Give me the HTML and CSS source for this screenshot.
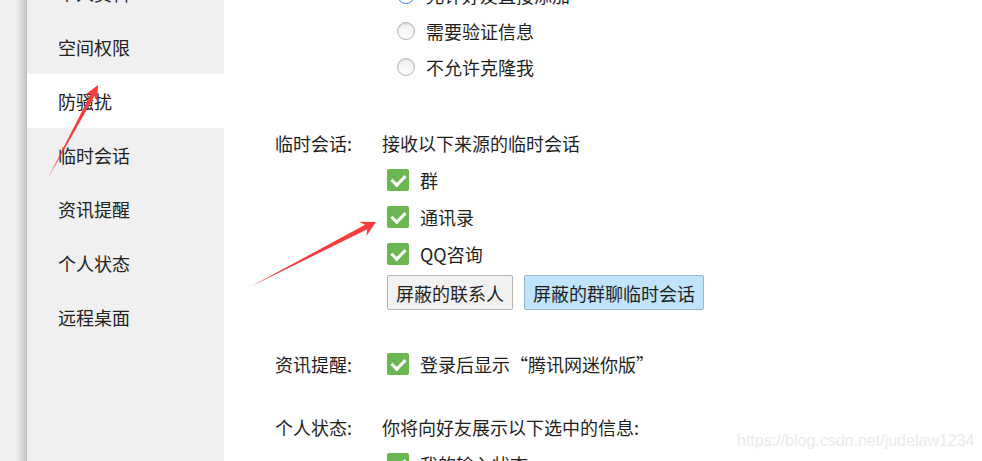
FILE: index.html
```html
<!DOCTYPE html>
<html lang="zh-CN">
<head>
  <meta charset="UTF-8">
  <title>权限设置</title>
  <link rel="stylesheet" href="styles.css">
</head>
<body>

<div class="page">

  <div class="edge"></div>

  <ul class="sidebar">
    <li>个人资料</li>
    <li>空间权限</li>
    <li class="active">防骚扰</li>
    <li>临时会话</li>
    <li>资讯提醒</li>
    <li>个人状态</li>
    <li>远程桌面</li>
  </ul>

  <div class="main">

    <div class="section radios">
      <div class="radio-row"><span class="radio checked"></span>允许好友直接添加</div>
      <div class="radio-row"><span class="radio"></span>需要验证信息</div>
      <div class="radio-row"><span class="radio"></span>不允许克隆我</div>
    </div>

    <div class="section temp">
      <div class="row">
        <span class="label">临时会话:</span>
        <span>接收以下来源的临时会话</span>
      </div>
      <div class="check-row"><span class="check"></span>群</div>
      <div class="check-row"><span class="check"></span>通讯录</div>
      <div class="check-row"><span class="check"></span>QQ咨询</div>
      <div class="buttons">
        <button class="btn">屏蔽的联系人</button>
        <button class="btn btn-hover">屏蔽的群聊临时会话</button>
      </div>
    </div>

    <div class="section news">
      <div class="row">
        <span class="label">资讯提醒:</span>
        <span class="inline-check"><span class="check"></span>登录后显示“腾讯网迷你版”</span>
      </div>
    </div>

    <div class="section status">
      <div class="row">
        <span class="label">个人状态:</span>
        <span>你将向好友展示以下选中的信息:</span>
      </div>
      <div class="check-row"><span class="check"></span>我的输入状态</div>
    </div>

  </div>

  <!-- annotation arrows drawn over the screenshot -->
  <svg class="arrows" width="982" height="461" viewBox="0 0 982 461">
    <polygon points="48,178 90.9,93.7 84.7,94.9 98,85 97.1,101.5 94.7,95.7" fill="#f63c3c"/>
    <polygon points="250,287 365.1,224.8 359,221.8 376,222 366.4,236 367.3,229.2" fill="#f63c3c"/>
  </svg>

  <div class="watermark">https://blog.csdn.net/judelaw1234</div>

</div>

</body>
</html>
```

FILE: styles.css
```css
body {
  margin: 0;
  font-family: "Noto Sans CJK SC", "Liberation Sans", sans-serif;
  font-size: 18px;
  color: #1f1f1f;
  background: #fff;
}

.page {
  position: relative;
  display: flex;
  width: 982px;
  height: 461px;
  overflow: hidden;
}

.edge {
  width: 27px;
  flex: none;
  background: linear-gradient(to right, #f0f0f0 0, #f0f0f0 16px, #e2e2e2 20px, #cbcbcb 25px, #bdbdbd 27px);
}

.sidebar {
  list-style: none;
  margin: -34px 0 0;
  padding: 0;
  width: 197px;
  flex: none;
  background: #f0f0f0;
}

.sidebar li {
  height: 54px;
  line-height: 54px;
  padding-left: 31px;
  color: #222;
}

.sidebar .active {
  background: #fff;
}

.main {
  flex: 1;
  padding-left: 51px;
  margin-top: -23px;
}

.radio-row {
  display: flex;
  align-items: center;
  height: 36px;
  padding-left: 122px;
}

.radio {
  width: 16px;
  height: 16px;
  border: 1px solid #b3b3b3;
  border-radius: 50%;
  background: linear-gradient(#efefef, #fff);
  box-shadow: inset 0 1px 2px rgba(0, 0, 0, 0.1);
  margin-right: 11px;
}

.radio.checked {
  border-color: #3d8ee6;
  background: radial-gradient(circle, #3d8ee6 0, #3d8ee6 4px, #fff 5px);
}

.temp {
  margin-top: 40px;
}

.row {
  display: flex;
  align-items: center;
  height: 36px;
}

.label {
  width: 107px;
}

.check-row {
  display: flex;
  align-items: center;
  height: 37px;
  padding-left: 112px;
}

.inline-check {
  display: flex;
  align-items: center;
  margin-left: 5px;
}

.check {
  position: relative;
  width: 22px;
  height: 22px;
  border-radius: 2px;
  background: #6ab650;
  margin-right: 11px;
}

.check::after {
  content: "";
  position: absolute;
  left: 7px;
  top: 3px;
  width: 6px;
  height: 11px;
  border: solid #fff;
  border-width: 0 3px 3px 0;
  transform: rotate(45deg);
}

.buttons {
  display: flex;
  gap: 11px;
  padding-left: 112px;
  margin-top: 3px;
}

.btn {
  height: 35px;
  padding: 0 8px;
  font-family: inherit;
  font-size: 18px;
  color: #1f1f1f;
  background: #f2f2f2;
  border: 1px solid #b4b4b4;
  border-radius: 2px;
}

.btn-hover {
  background: #c0e4fb;
  border-color: #97b5cd;
}

.news {
  margin-top: 36px;
}

.status {
  margin-top: 27px;
}

.arrows {
  position: absolute;
  left: 0;
  top: 0;
  pointer-events: none;
}

.watermark {
  position: absolute;
  left: 737px;
  top: 432px;
  font-family: "Liberation Sans", sans-serif;
  font-size: 16px;
  color: #ebebeb;
}
```
